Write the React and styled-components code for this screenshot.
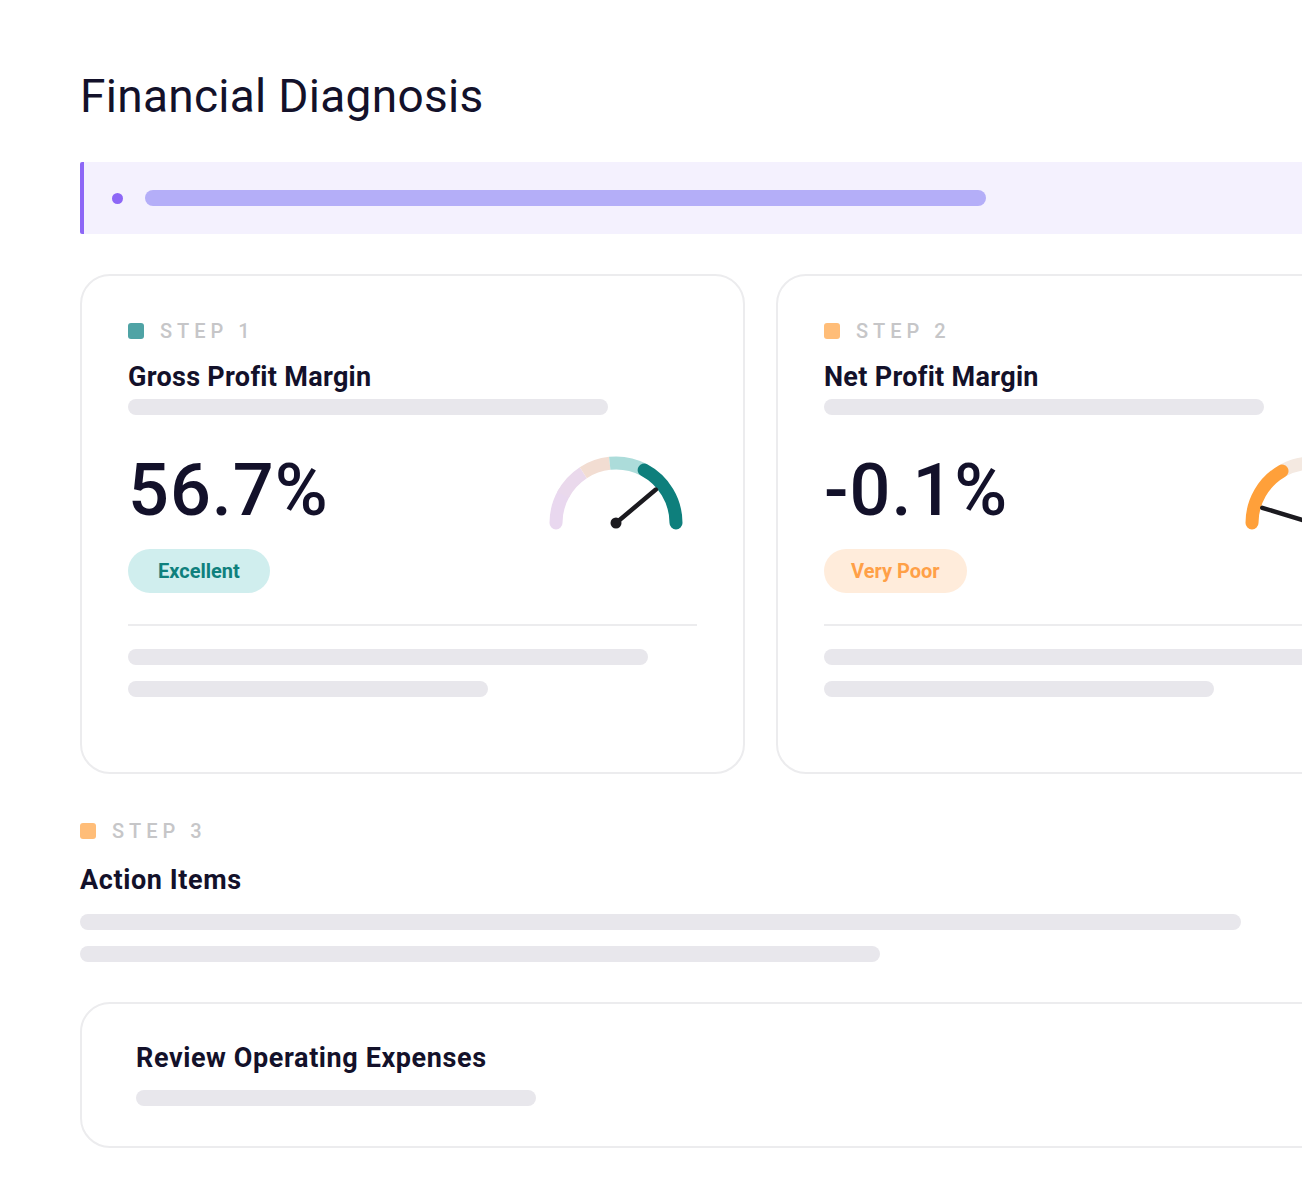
import React from "react";
import styled, { createGlobalStyle } from "styled-components";

const GlobalStyle = createGlobalStyle`
  html, body {
    margin: 0;
    padding: 0;
    background: #ffffff;
    overflow: hidden;
  }
  body {
    font-family: Roboto, "Liberation Sans", sans-serif;
    color: #13112a;
  }
`;

const Page = styled.div`
  width: 1400px;
  padding: 68px 0 0 80px;
`;

const Title = styled.h1`
  margin: 0;
  font-size: 46px;
  line-height: 56px;
  font-weight: 400;
  letter-spacing: 0.3px;
  color: #13112a;
`;

const Banner = styled.div`
  margin-top: 38px;
  width: 1361px;
  height: 72px;
  box-sizing: border-box;
  background: #f4f1fe;
  border-left: 4px solid #8d67f6;
  border-radius: 2px;
  display: flex;
  align-items: center;
  padding-left: 28px;
  gap: 22px;
`;

const Dot = styled.span`
  width: 11px;
  height: 11px;
  border-radius: 50%;
  background: #8d67f6;
`;

const Skeleton = styled.div`
  width: ${(p) => p.w}px;
  height: 16px;
  border-radius: 8px;
  background: ${(p) => p.color || "#e8e7ec"};
  margin-top: ${(p) => p.mt || 0}px;
  flex-shrink: 0;
`;

const CardRow = styled.div`
  margin-top: 40px;
  display: flex;
  gap: 31px;
`;

const Card = styled.div`
  width: 665px;
  height: 500px;
  box-sizing: border-box;
  border: 2px solid #ececee;
  border-radius: 30px;
  padding: 46px 46px 0 46px;
  display: flex;
  flex-direction: column;
  flex-shrink: 0;
`;

const StepRow = styled.div`
  display: flex;
  align-items: center;
  gap: 16px;
  height: 18px;
`;

const StepSquare = styled.span`
  width: 16px;
  height: 16px;
  border-radius: 3px;
  background: ${(p) => p.color};
`;

const StepLabel = styled.span`
  font-size: 20px;
  line-height: 18px;
  letter-spacing: 5px;
  color: #c6c6c8;
  font-weight: 500;
`;

const HeadingText = styled.h2`
  margin: ${(p) => p.mt || 0}px 0 0 0;
  font-size: 27px;
  line-height: 32px;
  font-weight: 700;
  letter-spacing: ${(p) => p.ls || 0.3}px;
  color: #13112a;
`;

const MetricRow = styled.div`
  margin-top: 36px;
  display: flex;
  justify-content: space-between;
  align-items: flex-start;
  height: 86px;
`;

const BigNumber = styled.div`
  font-size: 72px;
  line-height: 80px;
  font-weight: 500;
  color: #13112a;
  letter-spacing: 1px;
`;

const GaugeSvg = styled.svg`
  margin-top: 4px;
  margin-right: 13px;
  flex-shrink: 0;
  overflow: visible;
`;

const Badge = styled.span`
  align-self: flex-start;
  margin-top: 12px;
  height: 44px;
  padding: 0 ${(p) => p.px}px;
  border-radius: 22px;
  display: inline-flex;
  align-items: center;
  font-size: 20px;
  font-weight: 700;
  background: ${(p) => p.bg};
  color: ${(p) => p.fg};
`;

const Divider = styled.div`
  margin-top: 31px;
  height: 2px;
  background: #ececee;
  width: 100%;
`;

const Section = styled.div`
  margin-top: 48px;
  display: flex;
  flex-direction: column;
`;

const ActionCard = styled.div`
  margin-top: 40px;
  width: 1361px;
  height: 146px;
  box-sizing: border-box;
  border: 2px solid #ececee;
  border-radius: 30px;
  padding: 38px 54px 0 54px;
  display: flex;
  flex-direction: column;
`;

const CX = 68;
const CY = 68;
const R = 60;

const pt = (deg, r = R) => {
  const a = (deg * Math.PI) / 180;
  return [CX + r * Math.cos(a), CY - r * Math.sin(a)];
};

const arc = (from, to) => {
  const [x1, y1] = pt(from);
  const [x2, y2] = pt(to);
  return `M ${x1} ${y1} A ${R} ${R} 0 0 1 ${x2} ${y2}`;
};

const Gauge = ({ segments, needle }) => {
  const [nx, ny] = pt(needle, 52);
  return (
    <GaugeSvg width="136" height="82" viewBox="0 0 136 82">
      {segments.map((s, i) => (
        <path
          key={i}
          d={arc(s.from, s.to)}
          stroke={s.color}
          strokeWidth="13"
          fill="none"
          strokeLinecap={s.cap ? "round" : "butt"}
        />
      ))}
      <line x1={CX} y1={CY} x2={nx} y2={ny} stroke="#1b1a1f" strokeWidth="4.5" strokeLinecap="round" />
      <circle cx={CX} cy={CY} r="5.5" fill="#1b1a1f" />
    </GaugeSvg>
  );
};

const metrics = [
  {
    step: "STEP 1",
    stepColor: "#4fa3a5",
    title: "Gross Profit Margin",
    value: "56.7%",
    badge: "Excellent",
    badgeBg: "#d0eeee",
    badgeFg: "#0f807d",
    badgePx: 30,
    bars: [480, 520, 360],
    needle: 40,
    segments: [
      { from: 180, to: 150, color: "#e9d8ef", cap: true },
      { from: 152, to: 123, color: "#ead9ec" },
      { from: 123, to: 96, color: "#f2ddd2" },
      { from: 96, to: 62, color: "#acdcda" },
      { from: 62, to: 0, color: "#0e7f7c", cap: true },
    ],
  },
  {
    step: "STEP 2",
    stepColor: "#ffbd78",
    title: "Net Profit Margin",
    value: "-0.1%",
    badge: "Very Poor",
    badgeBg: "#ffecdb",
    badgeFg: "#ffa047",
    badgePx: 27,
    bars: [440, 560, 390],
    needle: 163,
    segments: [
      { from: 118, to: 0, color: "#f4e9e1", cap: true },
      { from: 180, to: 120, color: "#ffa03a", cap: true },
    ],
  },
];

const MetricCard = ({ m }) => (
  <Card>
    <StepRow>
      <StepSquare color={m.stepColor} />
      <StepLabel>{m.step}</StepLabel>
    </StepRow>
    <HeadingText mt={21}>{m.title}</HeadingText>
    <Skeleton w={m.bars[0]} mt={6} />
    <MetricRow>
      <BigNumber>{m.value}</BigNumber>
      <Gauge segments={m.segments} needle={m.needle} />
    </MetricRow>
    <Badge bg={m.badgeBg} fg={m.badgeFg} px={m.badgePx}>{m.badge}</Badge>
    <Divider />
    <Skeleton w={m.bars[1]} mt={23} />
    <Skeleton w={m.bars[2]} mt={16} />
  </Card>
);

export default function App() {
  return (
    <>
      <GlobalStyle />
      <Page>
        <Title>Financial Diagnosis</Title>
        <Banner>
          <Dot />
          <Skeleton w={841} color="#b4aef8" />
        </Banner>
        <CardRow>
          {metrics.map((m) => (
            <MetricCard key={m.step} m={m} />
          ))}
        </CardRow>
        <Section>
          <StepRow>
            <StepSquare color="#ffbd78" />
            <StepLabel>STEP 3</StepLabel>
          </StepRow>
          <HeadingText mt={24} ls={0.6}>Action Items</HeadingText>
          <Skeleton w={1161} mt={18} />
          <Skeleton w={800} mt={16} />
        </Section>
        <ActionCard>
          <HeadingText ls={0.6}>Review Operating Expenses</HeadingText>
          <Skeleton w={400} mt={16} />
        </ActionCard>
      </Page>
    </>
  );
}
